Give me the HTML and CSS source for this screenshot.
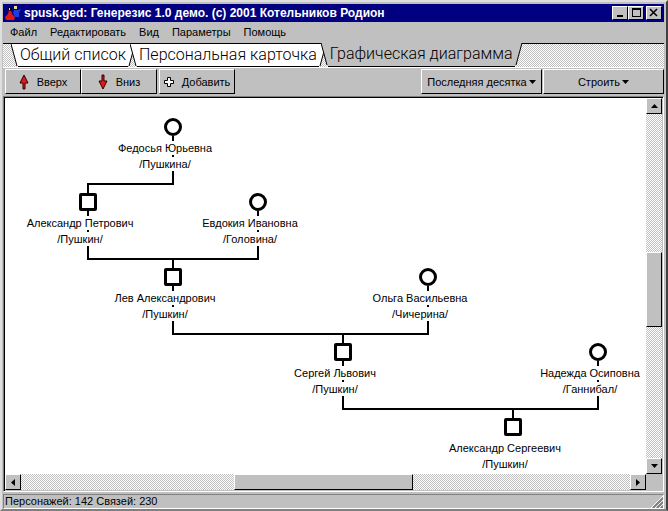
FILE: index.html
```
<!DOCTYPE html>
<html lang="ru">
<head>
  <meta charset="utf-8">
  <title>spusk.ged: Генерезис 1.0 демо</title>
  <link rel="stylesheet" href="styles.css">
</head>
<body>
  <div class="window">
    <header class="title-bar">
      <svg class="app-icon" width="16" height="16" viewBox="0 0 16 16">
        <path d="M9 5H13L16 4L14 8V12H10L8 8Z" fill="#1840e0"/>
        <path d="M4 5H6L7 9L10 12L9 15H1L0 12L3 9Z" fill="#e01818"/>
        <path d="M3 2H7V5L5 6L3 5Z" fill="#000"/>
        <path d="M9 1H12V4H9Z" fill="#f0d890"/>
        <path d="M4 3H5V5H4Z" fill="#f0d890"/>
      </svg>
      <h1>spusk.ged: Генерезис 1.0 демо. (c) 2001 Котельников Родион</h1>
      <div class="window-buttons">
        <button aria-label="Свернуть"><svg width="12" height="10"><path d="M3 8h6" stroke="#000" stroke-width="2"/></svg></button>
        <button aria-label="Развернуть"><svg width="12" height="10"><path d="M2 0h9v9H2zM3 2v6h7V2z" fill-rule="evenodd"/></svg></button>
        <button class="close" aria-label="Закрыть"><svg width="12" height="10"><path d="M2 1l7 7M9 1l-7 7" stroke="#000" stroke-width="1.500"/></svg></button>
      </div>
    </header>

    <nav class="menu">
      <button>Файл</button>
      <button>Редактировать</button>
      <button>Вид</button>
      <button>Параметры</button>
      <button>Помощь</button>
    </nav>

    <div class="tabs">
      <button class="tab">
        <svg width="7" height="23"><path d="M0 0L6 22H7V0Z" fill="#fff"/><path d="M0 0L6 22" stroke="#000"/></svg>
        <span>Общий список</span>
        <svg width="7" height="23"><path d="M7 0L1 22H0V0Z" fill="#fff"/><path d="M7 0L1 22" stroke="#000"/></svg>
      </button>
      <button class="tab">
        <svg width="7" height="23"><path d="M0 0L6 22H7V0Z" fill="#fff"/><path d="M0 0L6 22" stroke="#000"/></svg>
        <span>Персональная карточка</span>
        <svg width="7" height="23"><path d="M7 0L1 22H0V0Z" fill="#fff"/><path d="M7 0L1 22" stroke="#000"/></svg>
      </button>
      <button class="tab active">
        <svg width="7" height="23"><path d="M0 0L6 22H7V0Z" fill="#c0c0c0"/><path d="M0 0L6 22" stroke="#000"/></svg>
        <span>Графическая диаграмма</span>
        <svg width="7" height="23"><path d="M7 0L1 22H0V0Z" fill="#c0c0c0"/><path d="M7 0L1 22" stroke="#000"/></svg>
      </button>
    </div>

    <div class="toolbar">
      <button class="tool"><svg width="10" height="16"><path d="M5 1L9 9H6V15H4V9H1Z" fill="#e01818" stroke="#300"/></svg>Вверх</button>
      <button class="tool"><svg width="10" height="16"><path d="M5 15L9 7H6V1H4V7H1Z" fill="#e01818" stroke="#300"/></svg>Вниз</button>
      <button class="tool add"><svg width="10" height="16"><path d="M3.500 3.500h3v3h3v3h-3v3h-3v-3h-3v-3h3z" fill="#fff" stroke="#000"/></svg>Добавить</button>
      <button class="tool wide">Последняя десятка<svg width="7" height="4"><path d="M0 0h7L3.500 4z"/></svg></button>
      <button class="tool wide">Строить<svg width="7" height="4"><path d="M0 0h7L3.500 4z"/></svg></button>
    </div>

    <main class="view">
      <div class="diagram">
        <svg class="links" width="640" height="376">
          <path d="M168 38V86H83V161H253V113M83 95V113M168 161V236H423V188M168 170V188M338 236V311H593V263M338 245V263M508 311V320"/>
        </svg>
        <div class="person woman col-2 row-1"><i></i><span>Федосья Юрьевна</span><span>/Пушкина/</span></div>
        <div class="person man col-1 row-2"><i></i><span>Александр Петрович</span><span>/Пушкин/</span></div>
        <div class="person woman col-3 row-2"><i></i><span>Евдокия Ивановна</span><span>/Головина/</span></div>
        <div class="person man col-2 row-3"><i></i><span>Лев Александрович</span><span>/Пушкин/</span></div>
        <div class="person woman col-5 row-3"><i></i><span>Ольга Васильевна</span><span>/Чичерина/</span></div>
        <div class="person man col-4 row-4"><i></i><span>Сергей Львович</span><span>/Пушкин/</span></div>
        <div class="person woman col-7 row-4"><i></i><span>Надежда Осиповна</span><span>/Ганнибал/</span></div>
        <div class="person man col-6 row-5"><i></i><span>Александр Сергеевич</span><span>/Пушкин/</span></div>
      </div>
      <div class="scroll vertical">
        <button aria-label="Вверх"><svg width="7" height="4"><path d="M0 4h7L3.500 0z"/></svg></button>
        <div class="before"></div>
        <div class="thumb"></div>
        <div class="after"></div>
        <button aria-label="Вниз"><svg width="7" height="4"><path d="M0 0h7L3.500 4z"/></svg></button>
      </div>
      <div class="scroll horizontal">
        <button aria-label="Влево"><svg width="4" height="7"><path d="M4 0v7L0 3.500z"/></svg></button>
        <div class="before"></div>
        <div class="thumb"></div>
        <div class="after"></div>
        <button aria-label="Вправо"><svg width="4" height="7"><path d="M0 0v7L4 3.500z"/></svg></button>
      </div>
    </main>

    <footer class="status">
      <span>Персонажей: 142 Связей: 230</span>
      <svg width="12" height="12"><path d="M0 12L12 0M4 12L12 4M8 12L12 8" stroke="#fff"/><path d="M2 12L12 2M6 12L12 6M10 12L12 10" stroke="#808080" stroke-width="2"/></svg>
    </footer>
  </div>
</body>
</html>
```
FILE: styles.css
```
* {
  box-sizing: border-box;
}
body {
  margin: 0;
  background: #c0c0c0;
  color: #000;
  font: 11px/16px "Liberation Sans", Arial, sans-serif;
}
button {
  margin: 0;
  padding: 0;
  border: none;
  background: none;
  color: inherit;
  font: inherit;
  white-space: nowrap;
}
svg {
  flex: none;
}
.window {
  display: flex;
  flex-direction: column;
  height: 100vh;
  padding: 2px 2px 0 1px;
  border: 2px solid #dfdfdf;
  border-right-color: #404040;
  border-bottom-color: #808080;
}

/* title */
.title-bar {
  display: flex;
  align-items: center;
  height: 18px;
  padding: 0 2px;
  background: #000080;
  color: #fff;
}
.title-bar h1 {
  flex: 1;
  margin: 0 0 0 3px;
  font-size: 12px;
  line-height: 18px;
  white-space: nowrap;
}
.window-buttons {
  display: flex;
}
.window-buttons button {
  display: flex;
  align-items: center;
  justify-content: center;
  width: 16px;
  height: 14px;
  background: #c0c0c0;
  border: 1px solid #fff;
  border-right-color: #000;
  border-bottom-color: #000;
}
.window-buttons .close {
  margin-left: 2px;
}

/* menu */
.menu {
  display: flex;
  gap: 13px;
  height: 21px;
  padding: 0 7px 1px 7px;
}

/* tabs */
.tabs {
  display: flex;
  height: 24px;
  padding-left: 8px;
  border-top: 1px solid #000;
  background: repeating-conic-gradient(#c0c0c0 0 25%, #fff 0 50%) 0 0 / 2px 2px;
}
.tab {
  display: flex;
  height: 23px;
  margin-right: -5px;
  font-family: Roboto, "Liberation Sans", sans-serif;
  font-size: 16px;
  font-weight: 300;
  line-height: 22px;
}
.tab span {
  padding: 0 2px;
  background: #fff;
  border-bottom: 1px solid #000;
}
.tab.active {
  height: 24px;
  margin-top: -1px;
}
.tab.active span {
  background: #c0c0c0;
}

/* toolbar */
.toolbar {
  display: flex;
  height: 29px;
  padding: 1px 0 2px 2px;
  border-top: 1px solid #fff;
}
.tool {
  display: flex;
  align-items: center;
  justify-content: center;
  gap: 8px;
  width: 76px;
  border: 1px solid #fff;
  border-right-color: #000;
  border-bottom-color: #000;
}
.tool.add {
  margin-left: 2px;
  margin-right: auto;
}
.tool.wide {
  gap: 2px;
  width: 121px;
  margin-left: 1px;
}

/* diagram with scroll bars */
.view {
  flex: 1;
  display: grid;
  grid-template: minmax(0, 1fr) 16px / minmax(0, 1fr) 16px;
  padding: 1px;
  border: 1px solid #808080;
  border-right-color: #fff;
  border-bottom-color: #fff;
  box-shadow: inset 1px 1px #000;
  min-height: 0;
}
.diagram {
  position: relative;
  overflow: hidden;
  background: #fff;
}
.links {
  display: block;
  fill: none;
  stroke: #000;
  stroke-width: 2px;
}
.person {
  position: absolute;
  display: flex;
  flex-direction: column;
  align-items: center;
  gap: 2px;
  width: 124px;
  margin-left: -70px;
}
/* the mark sits right of the middle of the name */
.person i {
  width: 18px;
  height: 18px;
  margin-bottom: 3px;
  margin-left: 16px;
  border: 3px solid #000;
  border-radius: 2px;
  background: #fff;
}
.woman i {
  border-radius: 50%;
}
.person span {
  background: #fff;
  line-height: 14px;
  white-space: nowrap;
}
.col-1 { left: 83px; }
.col-2 { left: 168px; }
.col-3 { left: 253px; }
.col-4 { left: 338px; }
.col-5 { left: 423px; }
.col-6 { left: 508px; }
.col-7 { left: 593px; }
.row-1 { top: 20px; }
.row-2 { top: 95px; }
.row-3 { top: 170px; }
.row-4 { top: 245px; }
.row-5 { top: 320px; }

.scroll {
  display: flex;
  background: repeating-conic-gradient(#c0c0c0 0 25%, #fff 0 50%) 0 0 / 2px 2px;
}
.vertical {
  flex-direction: column;
}
.scroll button {
  display: flex;
  align-items: center;
  justify-content: center;
  flex: 0 0 16px;
}
.vertical button {
  width: 16px;
}
.scroll button,
.thumb {
  background: #c0c0c0;
  border: 1px solid #fff;
  border-right-color: #000;
  border-bottom-color: #000;
}
.vertical .before { flex: 139; }
.vertical .thumb { flex: 73; }
.vertical .after { flex: 132; }
.horizontal .before { flex: 214; }
.horizontal .thumb { flex: 177; }
.horizontal .after { flex: 218; }

/* status */
.status {
  display: flex;
  align-items: flex-end;
  justify-content: space-between;
  height: 15px;
  margin-top: 2px;
  padding-left: 1px;
  border: 1px solid #808080;
  border-right-color: #fff;
  border-bottom-color: #fff;
  line-height: 13px;
}
```
